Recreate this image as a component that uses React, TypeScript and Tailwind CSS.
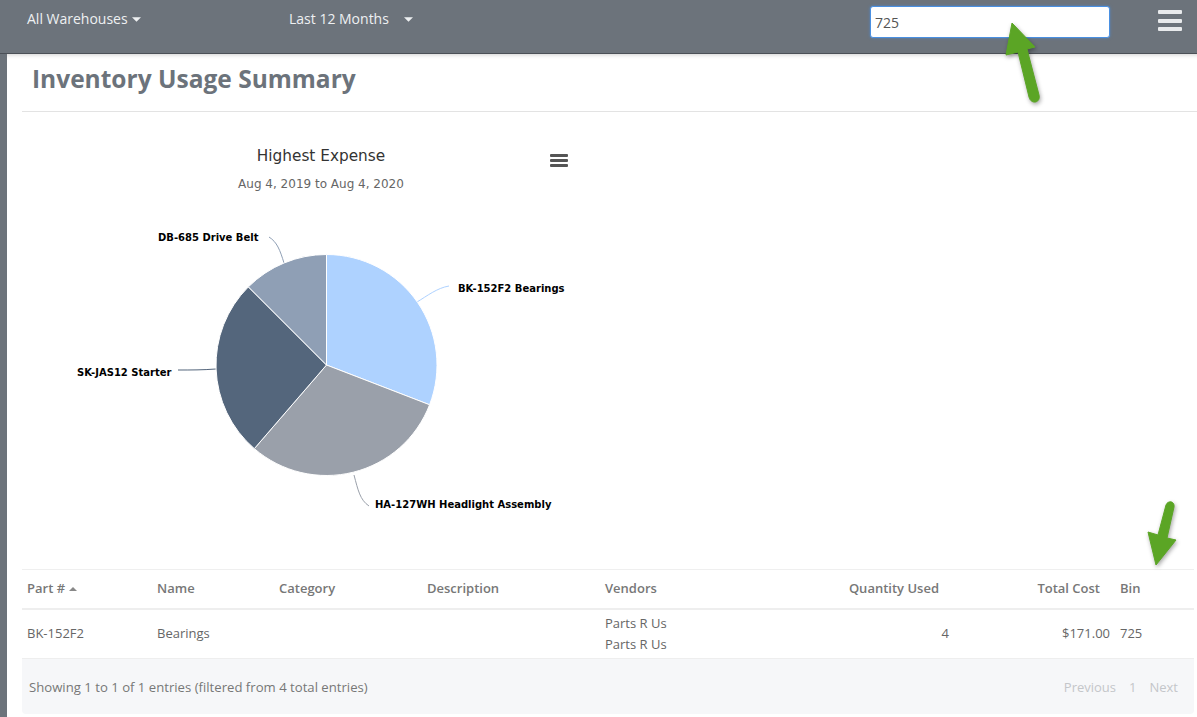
const openSans = { fontFamily: '"Open Sans", sans-serif' }

// Pie slices, centre 326.5,365 in page coordinates minus the chart offset
const cx = 304.5
const cy = 235
const r = 110.5

const slices = [
  { from: 0, to: 111.1, fill: '#aed2ff' },
  { from: 111.1, to: 220.8, fill: '#9aa0aa' },
  { from: 220.8, to: 315, fill: '#54667c' },
  { from: 315, to: 360, fill: '#8f9fb5' },
]

function polar(deg: number) {
  const a = (deg * Math.PI) / 180
  return `${(cx + r * Math.sin(a)).toFixed(2)} ${(cy - r * Math.cos(a)).toFixed(2)}`
}

function slicePath(from: number, to: number) {
  const large = to - from > 180 ? 1 : 0
  return `M ${cx} ${cy} L ${polar(from)} A ${r} ${r} 0 ${large} 1 ${polar(to)} Z`
}

function Caret({ className }: { className: string }) {
  return (
    <svg viewBox="0 0 10 5" className={className} fill="currentColor">
      <path d="M0 0 L10 0 L5 5 Z" />
    </svg>
  )
}

function PieChart() {
  return (
    <svg width="580" height="430" viewBox="0 0 580 430" className="block">
      <g style={{ fontFamily: '"DejaVu Sans", sans-serif' }}>
        <text x="299" y="31" textAnchor="middle" fontSize="15.3" fill="#333333">Highest Expense</text>
        <text x="299" y="58" textAnchor="middle" fontSize="12" fill="#666666">Aug 4, 2019 to Aug 4, 2020</text>
        <g fontSize="10" fontWeight="700" fill="#000000">
          <text x="436" y="162">BK-152F2 Bearings</text>
          <text x="353" y="378">HA-127WH Headlight Assembly</text>
          <text x="55" y="246">SK-JAS12 Starter</text>
          <text x="136" y="111">DB-685 Drive Belt</text>
        </g>
      </g>
      <g fill="none" strokeWidth="1">
        <path d="M 395 172 C 405 166 415 158 427 156" stroke="#aed2ff" />
        <path d="M 332 345 C 336 360 338 370 347 376" stroke="#9aa0aa" />
        <path d="M 194 239 C 180 240 170 240 156 240" stroke="#54667c" />
        <path d="M 262 133 C 258 120 255 112 247 107" stroke="#8f9fb5" />
      </g>
      {slices.map((s) => (
        <path key={s.from} d={slicePath(s.from, s.to)} fill={s.fill} stroke="#ffffff" strokeWidth="1" strokeLinejoin="round" />
      ))}
      <g fill="#555555">
        <rect x="528" y="24" width="18" height="3" rx="1" />
        <rect x="528" y="29" width="18" height="3" rx="1" />
        <rect x="528" y="34" width="18" height="3" rx="1" />
      </g>
    </svg>
  )
}

function GreenArrow({ d, className, w, h }: { d: string; className: string; w: number; h: number }) {
  return (
    <svg width={w} height={h} viewBox={`0 0 ${w} ${h}`} className={className} style={{ filter: 'drop-shadow(1px 2px 2px rgba(0,0,0,0.35))' }}>
      <path d={d} fill="#5ba525" stroke="#5ba525" strokeWidth="1" strokeLinejoin="round" />
    </svg>
  )
}

export default function App() {
  return (
    <div className="relative h-[717px] w-[1197px] overflow-hidden bg-white" style={openSans}>
      {/* Top bar */}
      <header className="flex h-[54px] items-start border-b border-[#4b5057] bg-[#6c737b] text-sm text-[#eef0f2]">
        <div className="flex w-[262px] items-center gap-1 pl-[27px] pt-[9px]">
          <span>All Warehouses</span>
          <Caret className="h-[5px] w-[9px]" />
        </div>
        <div className="flex w-[608px] items-center pl-[27px] pt-[9px]">
          <span>Last 12 Months</span>
          <Caret className="ml-[15px] h-[5px] w-[9px]" />
        </div>
        <input
          readOnly
          value="725"
          className="mt-[6px] h-[32px] w-[240px] rounded-[3px] border border-[#4a90e2] bg-white px-1 text-sm text-[#555] shadow-[0_0_3px_rgba(74,144,226,0.7)] outline-none"
          style={openSans}
        />
        <div className="ml-[48px] mt-[10px] flex w-[24px] flex-col gap-[4.5px]">
          <div className="h-[4px] rounded-[1px] bg-[#e8eaec]" />
          <div className="h-[4px] rounded-[1px] bg-[#e8eaec]" />
          <div className="h-[4px] rounded-[1px] bg-[#e8eaec]" />
        </div>
      </header>

      <div className="flex h-[663px]">
        <div className="w-[7px] shrink-0 bg-[#6c737b]" />
        <main className="min-w-0 flex-1 pl-[15px] shadow-[inset_0_5px_4px_-4px_rgba(0,0,0,0.18)]">
          <div className="h-[58px] border-b border-[#e3e3e3] pl-[10px] pt-[6px]">
            <h1 className="text-[24.5px] font-bold leading-[38px] text-[#6c737b]">Inventory Usage Summary</h1>
          </div>

          <div className="h-[457px] pt-[18px]">
            <PieChart />
          </div>

          <div className="w-[1172px] text-[13px] text-[#666]">
            <table className="w-full table-fixed border-collapse">
              <colgroup>
                <col className="w-[130px]" />
                <col className="w-[122px]" />
                <col className="w-[148px]" />
                <col className="w-[178px]" />
                <col className="w-[196px]" />
                <col className="w-[158px]" />
                <col className="w-[161px]" />
                <col />
              </colgroup>
              <thead>
                <tr className="h-[39px] border-t border-b-2 border-t-[#efefef] border-b-[#eeeeee] text-[#777] [&>th]:font-semibold">
                  <th className="pl-[5px] text-left">
                    <span className="flex items-center gap-1">
                      Part #
                      <svg viewBox="0 0 10 5" className="h-[4px] w-[8px] text-[#888]" fill="currentColor">
                        <path d="M0 5 L10 5 L5 0 Z" />
                      </svg>
                    </span>
                  </th>
                  <th className="pl-[5px] text-left">Name</th>
                  <th className="pl-[5px] text-left">Category</th>
                  <th className="pl-[5px] text-left">Description</th>
                  <th className="pl-[5px] text-left">Vendors</th>
                  <th className="pr-[15px] text-right">Quantity Used</th>
                  <th className="pr-[15px] text-right">Total Cost</th>
                  <th className="pl-[5px] text-left">Bin</th>
                </tr>
              </thead>
              <tbody>
                <tr className="h-[50px] border-b border-[#eeeeee]">
                  <td className="pl-[5px]">BK-152F2</td>
                  <td className="pl-[5px]">Bearings</td>
                  <td />
                  <td />
                  <td className="pl-[5px] leading-[21px]">
                    <div>Parts R Us</div>
                    <div>Parts R Us</div>
                  </td>
                  <td className="pr-[5px] text-right">4</td>
                  <td className="pr-[5px] text-right">$171.00</td>
                  <td className="pl-[5px]">725</td>
                </tr>
              </tbody>
            </table>
            <div className="flex h-[55px] items-center justify-between rounded-b-[4px] bg-[#f6f7f9] pl-[7px] pr-[16px] pt-[2px]">
              <span className="text-[13.15px] text-[#777]">Showing 1 to 1 of 1 entries (filtered from 4 total entries)</span>
              <div className="flex gap-[13px] text-[#c4c6c9]">
                <span>Previous</span>
                <span>1</span>
                <span>Next</span>
              </div>
            </div>
          </div>
        </main>
      </div>

      {/* Annotation arrows drawn over the page */}
      <GreenArrow
        w={44}
        h={82}
        className="absolute left-[1004px] top-[22px]"
        d="M 8 1 L 31 25 L 23 27 L 35 73 C 37 81 27 83 25 75 L 14 30 L 2 33 Z"
      />
      <GreenArrow
        w={40}
        h={72}
        className="absolute left-[1143px] top-[498px]"
        d="M 13 67 L 5 34 L 15 37 L 23 7 C 25 2 32 3 31 9 L 24 40 L 33 42 Z"
      />
    </div>
  )
}
